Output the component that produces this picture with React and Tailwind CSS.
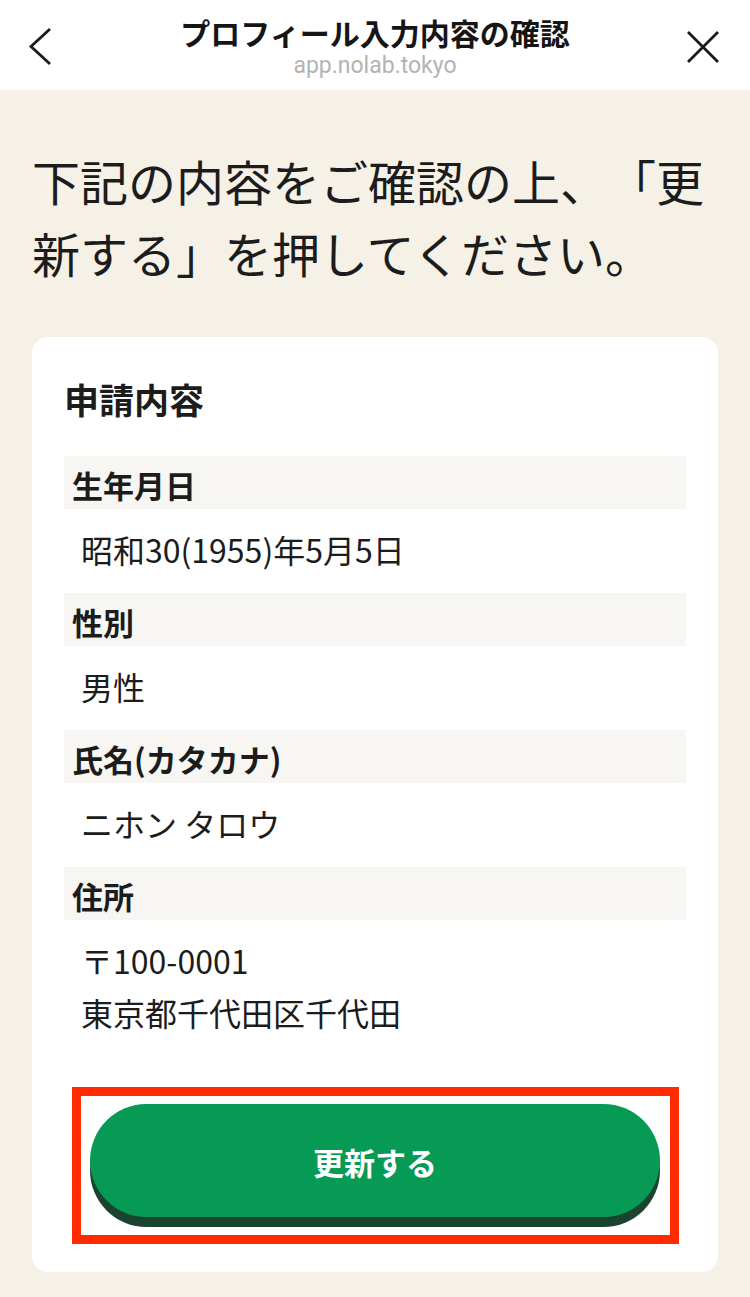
// プロフィール入力内容の確認画面
import React from 'react';

const FONT = { fontFamily: '"Noto Sans CJK JP", "Noto Sans", sans-serif' };

const rows = [
  { label: '生年月日', value: ['昭和30(1955)年5月5日'] },
  { label: '性別', value: ['男性'] },
  { label: '氏名(カタカナ)', value: ['ニホン タロウ'] },
  { label: '住所', value: ['〒100-0001', '東京都千代田区千代田'] },
];

const Header = () => (
  <div className="relative h-[90px] bg-white">
    <svg
      className="absolute left-[26px] top-[25px]"
      width="30"
      height="44"
      viewBox="0 0 30 44"
      fill="none"
      stroke="#1a1a1a"
      strokeWidth="2.8"
    >
      <path d="M24 4 L5 21.5 L24 39" />
    </svg>
    <div className="flex flex-col items-center pt-[11px]">
      <p className="text-[30px] leading-[42px] font-bold text-[#151515]">
        プロフィール入力内容の確認
      </p>
      <p
        className="text-[23px] leading-[26px] text-[#b3b3b3]"
        style={{ fontFamily: 'Roboto, "Liberation Sans", sans-serif' }}
      >
        app.nolab.tokyo
      </p>
    </div>
    <svg
      className="absolute left-[684px] top-[28px]"
      width="38"
      height="38"
      viewBox="0 0 38 38"
      fill="none"
      stroke="#1a1a1a"
      strokeWidth="2.8"
    >
      <path d="M4 4 L34 34 M34 4 L4 34" />
    </svg>
  </div>
);

const App = () => {
  return (
    <div className="min-h-[1297px] bg-[#f5f1e7] text-[#1c1c1c]" style={FONT}>
      <Header />

      {/* 案内文 */}
      <p className="px-[32px] pt-[54px] text-[48px] leading-[72px] [text-spacing-trim:space-all]">
        下記の内容をご確認の上、「更新する」を押してください。
      </p>

      {/* 申請内容カード */}
      <div className="mx-[32px] mt-[49px] rounded-[16px] bg-white px-[32px] pt-[37px] pb-[45px]">
        <h2 className="text-[35px] leading-[50px] font-bold">申請内容</h2>

        <div className="mt-[32px]">
          {rows.map(row => (
            <div key={row.label}>
              <div className="h-[53px] bg-[#f7f6f2] pl-[8px] pt-[6px] text-[31px] leading-[46px] font-bold">
                {row.label}
              </div>
              <div className="pl-[17px] pt-[14px] pb-[18px] text-[32px] leading-[52px]">
                {row.value.map(line => (
                  <p key={line}>{line}</p>
                ))}
              </div>
            </div>
          ))}
        </div>

        {/* 更新ボタン */}
        <div className="relative mx-[26px] mt-[48px] mb-[10px]">
          <button className="flex h-[113px] w-full items-center justify-center rounded-full bg-[#079a55] pt-[4px] text-[31px] font-bold text-white shadow-[0_10px_0_#1a4430]">
            更新する
          </button>
          <div className="pointer-events-none absolute -left-[18px] -right-[19px] -top-[17px] -bottom-[27px] border-[9px] border-[#ff2a00]" />
        </div>
      </div>
    </div>
  );
};

export default App;
